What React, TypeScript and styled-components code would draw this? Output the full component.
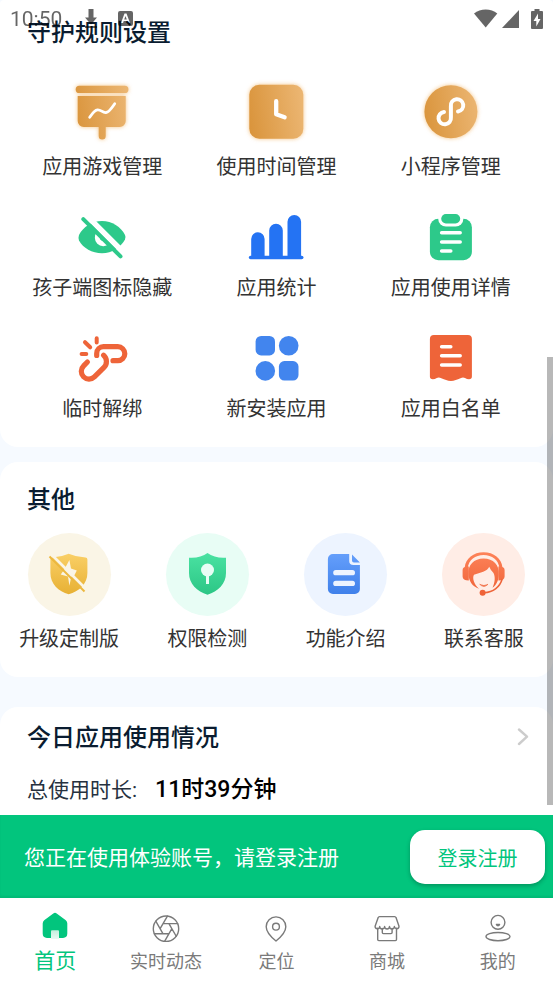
import React from "react";
import styled, { createGlobalStyle, css } from "styled-components";

const GlobalStyle = createGlobalStyle`
  *, *::before, *::after { box-sizing: border-box; }
  html, body, #root { height: 100%; }
  body {
    margin: 0;
    background: #f6faff;
    color: #333;
    font-family: Roboto, "Noto Sans CJK SC", sans-serif;
  }
  h2, p, dl, dd, ul { margin: 0; padding: 0; }
  svg { display: block; flex: none; }
`;

const Screen = styled.div`
  position: relative;
  display: flex;
  flex-direction: column;
  height: 100vh;
  overflow: hidden;
`;

const StatusBar = styled.header`
  position: absolute;
  z-index: 2;
  top: 0;
  left: 0;
  right: 0;
  display: flex;
  justify-content: space-between;
  align-items: center;
  height: 37px;
  padding: 0 5px 0 10px;
  color: #000;
  opacity: 0.6;
`;

const StatusGroup = styled.div<{ $gap: number }>`
  display: flex;
  align-items: center;
  gap: ${(p) => p.$gap}px;
  font-size: 21px;
  line-height: 24px;
`;

const Content = styled.main`
  position: relative;
  flex: 1;
  min-height: 0;
  overflow: hidden;
`;

const ScrollThumb = styled.div`
  position: absolute;
  right: 0;
  top: 357px;
  bottom: 10px;
  width: 6px;
  background: rgba(0, 0, 0, 0.28);
`;

const Card = styled.section<{ $top: number; $bottom?: number; $after?: number; $first?: boolean }>`
  padding: ${(p) => p.$top}px 0 ${(p) => p.$bottom ?? 24}px;
  margin-bottom: ${(p) => p.$after ?? 0}px;
  border-radius: ${(p) => (p.$first ? "4px 4px 18px 18px" : "18px")};
  background: #fff;
`;

const CardTitle = styled.h2`
  color: #0a1c30;
  font-size: 24px;
  font-weight: 500;
  line-height: 32px;
`;

const CardHead = styled.div<{ $gap: number }>`
  display: flex;
  justify-content: space-between;
  align-items: center;
  padding: 0 24px 0 27px;
  margin-bottom: ${(p) => p.$gap}px;
`;

const RuleGrid = styled.div`
  display: grid;
  grid-template-columns: repeat(3, 1fr);
  row-gap: 20px;
  padding: 0 15px;
`;

const OtherGrid = styled.div`
  display: grid;
  grid-template-columns: repeat(4, 1fr);
`;

const plainButton = css`
  border: 0;
  padding: 0;
  background: none;
  font-family: inherit;
  cursor: pointer;
`;

const Tile = styled.button`
  ${plainButton}
  display: flex;
  flex-direction: column;
  align-items: center;
  gap: 9px;
  color: #333;
  font-size: 20px;
  line-height: 28px;
  white-space: nowrap;
`;

const Disc = styled.span<{ $tint: string }>`
  width: 83px;
  height: 83px;
  border-radius: 50%;
  background: ${(p) => p.$tint};
`;

const MoreButton = styled.button`
  ${plainButton}
`;

const Total = styled.dl`
  display: flex;
  align-items: center;
  gap: 18px;
  padding: 0 27px;
  line-height: 30px;
`;

const TotalLabel = styled.dt`
  color: #26313f;
  font-size: 21px;
`;

const TotalValue = styled.dd`
  color: #000;
  font-size: 23px;
  font-weight: 500;
`;

const Banner = styled.aside`
  display: flex;
  justify-content: space-between;
  align-items: center;
  min-height: 83px;
  padding: 0 8px 0 24px;
  background: #02c57d;
  box-shadow: inset 0 -2px 2px rgba(0, 0, 0, 0.06);
  color: #fff;
  font-size: 21px;
  line-height: 30px;
`;

const BannerText = styled.p`
  && { padding-top: 2px; }
`;

const LoginButton = styled.button`
  ${plainButton}
  width: 135px;
  height: 54px;
  padding-top: 2px;
  border-radius: 15px;
  background: #fff;
  box-shadow: 0 2px 4px rgba(0, 0, 0, 0.25);
  color: #02c57d;
  font-size: 20px;
`;

const TabBar = styled.nav`
  display: grid;
  grid-template-columns: repeat(5, 1fr);
  min-height: 86px;
  padding-top: 13px;
  background: #fff;
`;

const Tab = styled.a<{ $active?: boolean }>`
  display: flex;
  flex-direction: column;
  align-items: center;
  gap: ${(p) => (p.$active ? 4 : 5)}px;
  color: ${(p) => (p.$active ? "#02c57d" : "#7a7a7a")};
  font-size: ${(p) => (p.$active ? 21 : 18)}px;
  line-height: 28px;
  text-decoration: none;
`;

const Glow = styled.svg`
  overflow: visible;
  filter: drop-shadow(0 0 2px rgba(240, 170, 80, 0.7));
`;

const Amber = ({ id }: { id: string }) => (
  <defs>
    <linearGradient id={id} gradientUnits="userSpaceOnUse" x1="5" y1="36" x2="59" y2="28">
      <stop stopColor="#da953d" />
      <stop offset="1" stopColor="#ebb571" />
    </linearGradient>
  </defs>
);

const rounded = { fill: "none", strokeLinecap: "round", strokeLinejoin: "round" } as const;

const BoardIcon = () => (
  <Glow width="64" height="64" viewBox="0 0 64 64">
    <Amber id="board" />
    <g fill="url(#board)">
      <rect x="5.7" y="5.7" width="52.7" height="7.3" rx="3.6" />
      <path d="M7.7 16H55.7V41a6 6 0 0 1-6 6H35.7V56a3.5 3.5 0 0 1-7 0V47H13.7a6 6 0 0 1-6-6Z" />
    </g>
    <path d="M19.7 37.3C22 34 24 30.3 27.5 29.8C31 29.4 32.5 33 36 32.5C39.5 32 42 27.5 44.7 23.7" {...rounded} stroke="#fff" strokeWidth="2.8" />
  </Glow>
);

const ClockIcon = () => (
  <Glow width="64" height="64" viewBox="0 0 64 64">
    <Amber id="clock" />
    <rect x="5.3" y="4.7" width="54" height="54" rx="10" fill="url(#clock)" />
    <path d="M32.2 21.2V34.3L40.6 37.2" {...rounded} stroke="#fff" strokeWidth="4.3" />
  </Glow>
);

const MiniProgramIcon = () => (
  <Glow width="64" height="64" viewBox="0 0 64 64">
    <Amber id="mini" />
    <circle cx="31.900" cy="31.700" r="26.500" fill="url(#mini)" />
    <path d="M25 32A6.200 6.200 0 1 0 31.900 37.500V26A6.200 6.200 0 1 1 39 31.500" {...rounded} stroke="#fff" strokeWidth="4" />
  </Glow>
);

const HiddenEyeIcon = () => (
  <svg width="64" height="64" viewBox="0 0 64 64">
    <path d="M9 34C13 26 22 20 32 20S51 26 55 34Q56 36 55 38.500C51 46 42 52.300 32 52.300S13 47 9 39.500Q8 37 9 34Z" fill="#2dc98a" />
    <path d="M27 31A8.500 8.500 0 0 0 39 43Z" fill="#fff" />
    <path d="M31 35.500L34 38.500L33 40A3.500 3.500 0 0 1 30 36Z" fill="#2dc98a" />
    <path d="M14 12L54 52" stroke="#fff" strokeWidth="5.500" />
    <path d="M13.300 18.200L50.500 55.400" stroke="#2dc98a" strokeWidth="4" strokeLinecap="round" />
  </svg>
);

const BarsIcon = () => (
  <svg width="64" height="64" viewBox="0 0 64 64" fill="#2473f3">
    <path d="M7.200 56V38a6.700 6.700 0 0 1 13.400 0V56ZM25.200 56V29.500a6.800 6.800 0 0 1 13.600 0V56ZM43.500 56V20.800a6.800 6.800 0 0 1 13.600 0V56Z" />
    <rect x="4.800" y="54.700" width="54.700" height="3.600" rx="1.800" />
  </svg>
);

const ClipboardIcon = () => (
  <svg width="64" height="64" viewBox="0 0 64 64">
    <rect x="10.900" y="17.700" width="42" height="41.600" rx="8.500" fill="#2dc98a" />
    <rect x="19.200" y="10" width="25.200" height="15.500" rx="7.700" fill="#fff" />
    <rect x="22.200" y="13" width="19" height="9.400" rx="4.700" fill="#2dc98a" />
    <path d="M22.600 31.700H41.200M22.600 40.900H41.200M22.600 50.100H31.800" {...rounded} stroke="#fff" strokeWidth="3.500" />
  </svg>
);

const UnlinkIcon = () => (
  <svg width="64" height="64" viewBox="0 0 64 64" {...rounded} stroke="#ee6439">
    <path strokeWidth="5.200" d="M26.700 33.400V31.400A6.800 6.800 0 0 1 33.500 24.700H47.800A7 7 0 0 1 47.800 38.700H43" />
    <path strokeWidth="5.200" d="M17.400 40L13.600 43.900A7.700 7.700 0 0 0 24.400 54.900L34 45.300A8.200 8.200 0 0 0 33.600 33.300" />
    <path strokeWidth="4" d="M26.700 16.300V20.600M15 20.200L20.200 25.300M11.600 32H16.300" />
  </svg>
);

const AppsIcon = () => (
  <svg width="64" height="64" viewBox="0 0 64 64" fill="#4285ee">
    <rect x="11.600" y="14" width="19.400" height="19.400" rx="5.500" />
    <circle cx="44.700" cy="23.700" r="9.800" />
    <circle cx="21.300" cy="48.900" r="9.800" />
    <rect x="34.900" y="39.100" width="19.600" height="19.500" rx="5.500" />
  </svg>
);

const WhitelistIcon = () => (
  <svg width="64" height="64" viewBox="0 0 64 64">
    <path d="M14.900 13H48.900a4 4 0 0 1 4 4V54.500Q52.900 57.300 50 57.300Q48 57.300 46 56Q44 54.900 41.500 56.200C38 57.300 35.500 58.900 31.900 58.900S26 57.300 22.300 56.200Q19.800 54.900 17.800 56Q15.800 57.300 13.800 57.300Q10.900 57.300 10.900 54.500V17a4 4 0 0 1 4-4Z" fill="#ee6439" />
    <path d="M22.600 24.700H31.800M22.600 33.800H41.200M22.600 43H41.200" {...rounded} stroke="#fff" strokeWidth="3.500" />
  </svg>
);

const Vertical = ({ id, from, to }: { id: string; from: string; to: string }) => (
  <defs>
    <linearGradient id={id} gradientUnits="userSpaceOnUse" x1="0" y1="20" x2="0" y2="62">
      <stop stopColor={from} />
      <stop offset="1" stopColor={to} />
    </linearGradient>
  </defs>
);

const UpgradeIcon = () => (
  <svg width="83" height="83" viewBox="0 0 83 83">
    <Vertical id="gold" from="#fad067" to="#e7b033" />
    <path d="M40.700 20.700Q49 24.300 57.500 24.500Q59.400 24.700 59.400 26.500V40C59.400 51 51 58.500 40.700 61.300C30.500 58.500 22.400 51 22.400 40V26.500Q22.400 24.700 24.400 24.500Q32.500 24.300 40.700 20.700Z" fill="url(#gold)" />
    <path d="M41.400 27L43 35.500L48.800 37.500L46 43L43.300 43.500L41.400 52.700L40 43.600L32.700 41.500L36 37Z" fill="#faf5e6" />
    <path d="M22.500 20.500L59 57" stroke="#faf5e6" strokeWidth="2.600" />
    <path d="M21.500 23.500L56.500 58.500" stroke="#ecb83f" strokeWidth="2" />
  </svg>
);

const PermissionIcon = () => (
  <svg width="83" height="83" viewBox="0 0 83 83">
    <Vertical id="mint" from="#4ae2a2" to="#2cc685" />
    <path d="M41.500 20Q49 25.500 60 24.700V40C60 51 52 58.500 41.500 61.700C31 58.500 23 51 23 40V24.700Q34 25.500 41.500 20Z" fill="url(#mint)" />
    <circle cx="41.500" cy="37" r="6.500" fill="#e8fdf5" />
    <path d="M41.500 40V51" stroke="#e8fdf5" strokeWidth="3" />
  </svg>
);

const DocumentIcon = () => (
  <svg width="83" height="83" viewBox="0 0 83 83">
    <Vertical id="azure" from="#659ffb" to="#3f80ea" />
    <path d="M28.900 21H45.200V28Q45.200 32 49.500 32H55.900V56a5 5 0 0 1-5 5H28.900a5 5 0 0 1-5-5V26a5 5 0 0 1 5-5ZM48 21.400L55.900 29.400H50Q48 29.400 48 27.400Z" fill="url(#azure)" />
    <path d="M31.800 39.700H48.400M31.800 50.400H48.400" {...rounded} stroke="#edf4ff" strokeWidth="5.200" />
  </svg>
);

const SupportIcon = () => (
  <svg width="83" height="83" viewBox="0 0 83 83">
    <Vertical id="coral" from="#fd8258" to="#ee6136" />
    <g fill="url(#coral)">
      <path d="M22.800 34C23.500 25.500 31.500 19.200 41.600 19.200S59.700 25.500 60.400 34L57.500 35C56.500 27 50 22 41.600 22S26.700 27 25.700 35Z" />
      <path d="M26.800 33.500Q20.600 33 20.600 37V43.500Q20.600 47.600 26.800 47.600ZM56.400 33.500Q62.600 33 62.600 37V43.500Q62.600 47.600 56.400 47.600Z" />
      <path d="M26.500 42C25.500 32 32 25.600 41.600 25.600S57.700 32 56.700 42C56.400 48 54.500 52 50.500 54.800C53 49.500 53.500 44 51.500 40Q49 38 47.200 33.800C45.500 38.500 38 39.500 32 41.800C30 45 32 51.500 37 55.800C30.500 53.500 27 48.500 26.500 42Z" />
      <circle cx="40.600" cy="59.700" r="3" />
    </g>
    <path d="M60 46.500C58 53.500 51.500 59.300 42 59.700" {...rounded} stroke="#ee6439" strokeWidth="1.600" />
    <path d="M37.700 51.300Q42 53.800 46 51.300Q42 55.600 37.700 51.300Z" fill="#ee6439" stroke="#ee6439" strokeWidth="0.600" />
  </svg>
);

const HomeIcon = () => (
  <svg width="32" height="32" viewBox="0 0 32 32">
    <defs>
      <linearGradient id="door" x1="0" y1="0" x2="0" y2="1">
        <stop stopColor="#c3efdd" />
        <stop offset="1" stopColor="#e9f9f3" />
      </linearGradient>
    </defs>
    <path d="M14.300 2.500Q16 1.200 17.700 2.500L26.800 9.300Q28.300 10.500 28.300 12.500V22.500Q28.300 26.900 24 26.900H8Q3.700 26.900 3.700 22.500V12.500Q3.700 10.500 5.200 9.300Z" fill="#02c57d" />
    <path d="M12 28V20.300Q12 19.300 13 19.300H19Q20 19.300 20 20.300V28Z" fill="url(#door)" />
  </svg>
);

const lineIcon = { width: 32, height: 32, viewBox: "0 0 32 32", stroke: "#7a7a7a", strokeWidth: 1.4, ...rounded };

const ApertureIcon = () => (
  <svg {...lineIcon}>
    <g transform="translate(.76 2.460) scale(1.270)" strokeWidth="1.1">
      <circle cx="12" cy="12" r="10" />
      <path d="M14.310 8l5.740 9.940M9.690 8h11.480M7.380 12l5.740-9.940M9.690 16 3.950 6.060M14.310 16H2.830M16.620 12l-5.740 9.940" />
    </g>
  </svg>
);

const PinIcon = () => (
  <svg {...lineIcon}>
    <path d="M16 30C10.500 25.500 6.200 21 6.200 15.700A9.800 9.800 0 0 1 25.800 15.700C25.800 21 21.500 25.500 16 30Z" />
    <circle cx="16" cy="15.700" r="3.400" />
  </svg>
);

const ShopIcon = () => (
  <svg {...lineIcon}>
    <path d="M8.500 5.600H23.600Q24.700 5.600 25 6.600L28 15.300A2.300 2.300 0 0 1 23.400 15.500A2.300 2.300 0 0 1 18.500 15.500A2.300 2.300 0 0 1 13.600 15.500A2.300 2.300 0 0 1 8.700 15.500A2.300 2.300 0 0 1 4.100 15.300L7.200 6.600Q7.500 5.600 8.500 5.600Z" />
    <path d="M6.700 17.300V28.500Q6.700 29.600 7.800 29.600H24.400Q25.500 29.600 25.500 28.500V17.300M11.300 17.500V21.500Q11.300 22.600 12.400 22.600H20Q21.100 22.600 21.100 21.500V17.500" />
  </svg>
);

const ProfileIcon = () => (
  <svg {...lineIcon}>
    <circle cx="16" cy="11.300" r="6.900" />
    <ellipse cx="16" cy="25.600" rx="12" ry="4.100" />
    <path d="M14.400 13.500H17.600Q17.400 14.700 16 14.700T14.400 13.500Z" fill="#7f7f7f" />
  </svg>
);

const rules = [
  { label: "应用游戏管理", Icon: BoardIcon },
  { label: "使用时间管理", Icon: ClockIcon },
  { label: "小程序管理", Icon: MiniProgramIcon },
  { label: "孩子端图标隐藏", Icon: HiddenEyeIcon },
  { label: "应用统计", Icon: BarsIcon },
  { label: "应用使用详情", Icon: ClipboardIcon },
  { label: "临时解绑", Icon: UnlinkIcon },
  { label: "新安装应用", Icon: AppsIcon },
  { label: "应用白名单", Icon: WhitelistIcon },
];

const others = [
  { label: "升级定制版", Icon: UpgradeIcon, tint: "#faf5e6" },
  { label: "权限检测", Icon: PermissionIcon, tint: "#e8fdf5" },
  { label: "功能介绍", Icon: DocumentIcon, tint: "#edf4ff" },
  { label: "联系客服", Icon: SupportIcon, tint: "#ffede6" },
];

const tabs = [
  { label: "首页", Icon: HomeIcon, active: true },
  { label: "实时动态", Icon: ApertureIcon },
  { label: "定位", Icon: PinIcon },
  { label: "商城", Icon: ShopIcon },
  { label: "我的", Icon: ProfileIcon },
];

export default function App() {
  return (
    <>
      <GlobalStyle />
      <Screen>
        <StatusBar>
          <StatusGroup $gap={20}>
            <span>10:50</span>
            <svg width="16" height="20" viewBox="0 0 16 20">
              <path d="M6.500 0H11.500V8.500H15L9 15.500L3 8.500H6.500ZM3 17H15V19H3Z" />
            </svg>
            <svg width="16" height="18" viewBox="0 0 16 18">
              <path fillRule="evenodd" d="M2 1H13Q15 1 15 3V14Q15 16 13 16H2Q0 16 0 14V3Q0 1 2 1ZM6.500 3.500L3 13H5L5.700 11H9.300L10 13H12L8.500 3.500ZM7.500 6L8.800 9.500H6.200Z" />
            </svg>
          </StatusGroup>
          <StatusGroup $gap={4}>
            <svg width="24" height="20" viewBox="0 0 24 20">
              <path d="M0 4.500Q5 .5 11.700 .5T23.300 4.500L11.700 18.500Z" />
            </svg>
            <svg width="20" height="20" viewBox="0 0 20 20">
              <path d="M17 1V19H0Z" />
            </svg>
            <svg width="22" height="22" viewBox="0 0 22 22">
              <path fillRule="evenodd" d="M8.500 1H13.500V3H16Q17 3 17 4V20Q17 21 16 21H6Q5 21 5 20V4Q5 3 6 3H8.500ZM12 5.500L7.500 13H10.300V18.500L14.500 11H12Z" />
            </svg>
          </StatusGroup>
        </StatusBar>

        <Content>
          <Card $top={17} $after={15} $first>
            <CardHead $gap={31}>
              <CardTitle>守护规则设置</CardTitle>
            </CardHead>
            <RuleGrid>
              {rules.map(({ label, Icon }) => (
                <Tile key={label} type="button">
                  <Icon />
                  {label}
                </Tile>
              ))}
            </RuleGrid>
          </Card>

          <Card $top={22} $after={30}>
            <CardHead $gap={17}>
              <CardTitle>其他</CardTitle>
            </CardHead>
            <OtherGrid>
              {others.map(({ label, Icon, tint }) => (
                <Tile key={label} type="button">
                  <Disc $tint={tint}>
                    <Icon />
                  </Disc>
                  {label}
                </Tile>
              ))}
            </OtherGrid>
          </Card>

          <Card $top={15} $bottom={120}>
            <CardHead $gap={21}>
              <CardTitle>今日应用使用情况</CardTitle>
              <MoreButton type="button" aria-label="今日应用使用情况">
                <svg width="12" height="20" viewBox="0 0 12 20">
                  <path d="M2 1.500L10 8.700L2 16" {...rounded} stroke="#ccc" strokeWidth="2.400" />
                </svg>
              </MoreButton>
            </CardHead>
            <Total>
              <TotalLabel>总使用时长:</TotalLabel>
              <TotalValue>11时39分钟</TotalValue>
            </Total>
          </Card>
          <ScrollThumb />
        </Content>

        <Banner>
          <BannerText>您正在使用体验账号，请登录注册</BannerText>
          <LoginButton type="button">登录注册</LoginButton>
        </Banner>

        <TabBar>
          {tabs.map(({ label, Icon, active }) => (
            <Tab key={label} href="#" $active={active} aria-current={active ? "page" : undefined}>
              <Icon />
              {label}
            </Tab>
          ))}
        </TabBar>
      </Screen>
    </>
  );
}
